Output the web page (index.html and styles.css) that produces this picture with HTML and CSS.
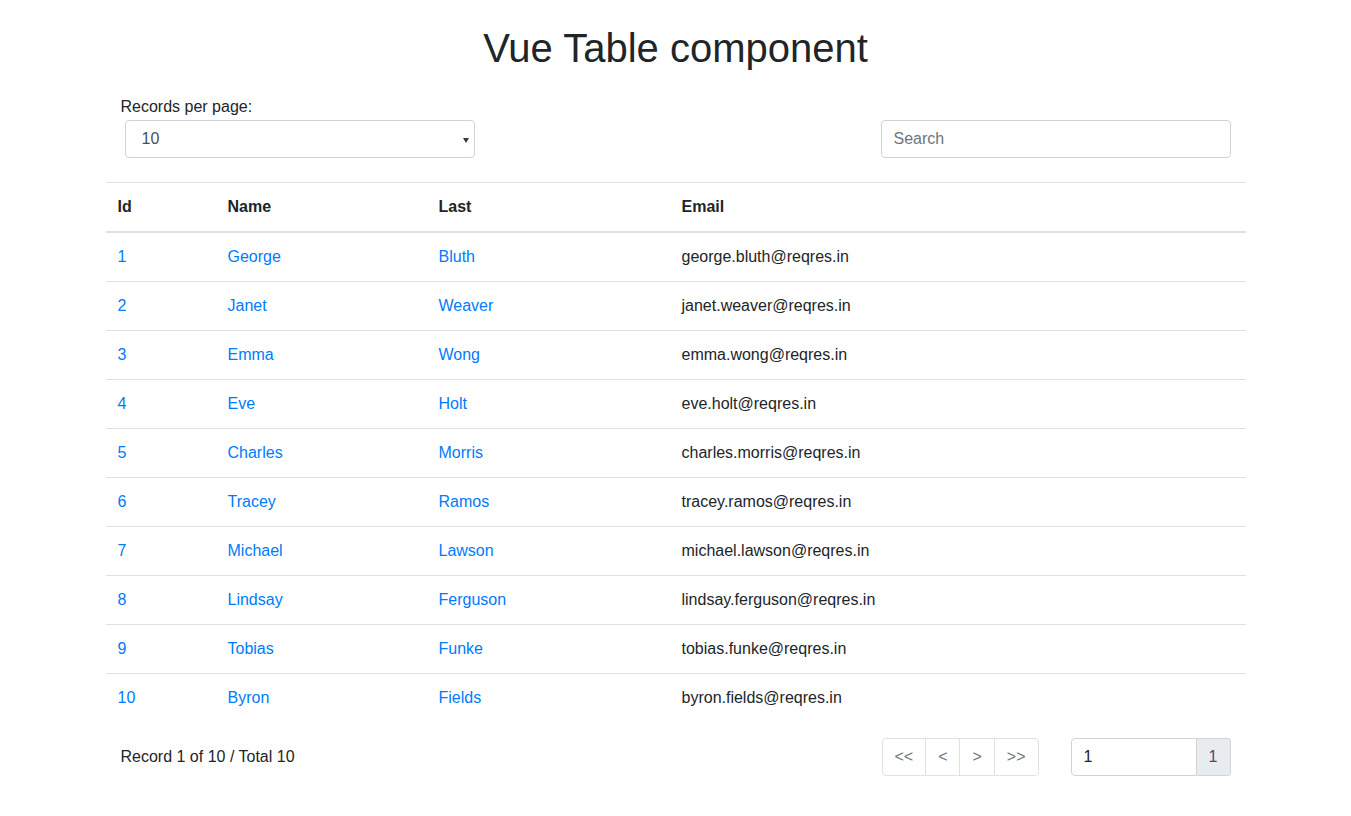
FILE: index.html
```html
<!DOCTYPE html>
<html lang="en">
<head>
<meta charset="utf-8">
<title>Vue Table component</title>
<link rel="stylesheet" href="styles.css">
</head>
<body>
<div class="container">
  <h1 class="title">Vue Table component</h1>
  <div class="controls">
    <div class="per-page">
      <label class="label">Records per page:</label>
      <div class="select">
        <span class="select-value">10</span>
        <span class="caret"></span>
      </div>
    </div>
    <div class="search">
      <input class="input" type="text" placeholder="Search">
    </div>
  </div>
  <table class="table">
    <thead>
      <tr><th class="c-id">Id</th><th class="c-name">Name</th><th class="c-last">Last</th><th>Email</th></tr>
    </thead>
    <tbody>
      <tr><td><a>1</a></td><td><a>George</a></td><td><a>Bluth</a></td><td>george.bluth@reqres.in</td></tr>
      <tr><td><a>2</a></td><td><a>Janet</a></td><td><a>Weaver</a></td><td>janet.weaver@reqres.in</td></tr>
      <tr><td><a>3</a></td><td><a>Emma</a></td><td><a>Wong</a></td><td>emma.wong@reqres.in</td></tr>
      <tr><td><a>4</a></td><td><a>Eve</a></td><td><a>Holt</a></td><td>eve.holt@reqres.in</td></tr>
      <tr><td><a>5</a></td><td><a>Charles</a></td><td><a>Morris</a></td><td>charles.morris@reqres.in</td></tr>
      <tr><td><a>6</a></td><td><a>Tracey</a></td><td><a>Ramos</a></td><td>tracey.ramos@reqres.in</td></tr>
      <tr><td><a>7</a></td><td><a>Michael</a></td><td><a>Lawson</a></td><td>michael.lawson@reqres.in</td></tr>
      <tr><td><a>8</a></td><td><a>Lindsay</a></td><td><a>Ferguson</a></td><td>lindsay.ferguson@reqres.in</td></tr>
      <tr><td><a>9</a></td><td><a>Tobias</a></td><td><a>Funke</a></td><td>tobias.funke@reqres.in</td></tr>
      <tr><td><a>10</a></td><td><a>Byron</a></td><td><a>Fields</a></td><td>byron.fields@reqres.in</td></tr>
    </tbody>
  </table>
  <div class="footer">
    <div class="info">Record 1 of 10 / Total 10</div>
    <div class="nav">
      <div class="pagination">
        <span class="page">&lt;&lt;</span><span class="page">&lt;</span><span class="page">&gt;</span><span class="page">&gt;&gt;</span>
      </div>
      <div class="input-group">
        <input class="input group-input" type="text" value="1">
        <span class="append">1</span>
      </div>
    </div>
  </div>
</div>
</body>
</html>
```
FILE: styles.css
```css
* { box-sizing: border-box; }
html, body { margin: 0; padding: 0; background: #fff; }
body {
  font-family: "Liberation Sans", Arial, sans-serif;
  font-size: 16px;
  line-height: 24px;
  color: #212529;
}
.container {
  width: 1140px;
  margin: 0 auto;
  padding-top: 24px;
}
.title {
  margin: 0 0 8px;
  font-size: 40px;
  font-weight: 500;
  line-height: 48px;
  text-align: center;
}
.controls {
  display: flex;
  justify-content: space-between;
  padding: 0 15px;
  margin-top: 23px;
  margin-bottom: 24px;
}
.per-page { display: flex; flex-direction: column; width: 354px; }
.label { display: block; height: 25px; line-height: 24px; }
.select {
  margin-left: 4px;
  height: 38px;
  border: 1px solid #ced4da;
  border-radius: 4px;
  display: flex;
  align-items: center;
  justify-content: space-between;
  padding: 0 5px 0 16px;
  color: #495057;
}
.caret {
  width: 0; height: 0;
  border-left: 3px solid transparent;
  border-right: 3px solid transparent;
  border-top: 5px solid #343a40;
  margin-top: 2px;
}
.search { padding-top: 25px; }
.input {
  font-family: inherit;
  font-size: 16px;
  color: #495057;
  height: 38px;
  width: 350px;
  padding: 6px 12px;
  border: 1px solid #ced4da;
  border-radius: 4px;
  outline: none;
}
.input::placeholder { color: #6c757d; }
.table {
  width: 100%;
  border-collapse: collapse;
  margin-bottom: 16px;
}
.table th, .table td {
  padding: 12px;
  text-align: left;
  vertical-align: top;
  border-top: 1px solid #dee2e6;
  line-height: 24px;
}
.table th { font-weight: bold; border-bottom: 2px solid #dee2e6; }
.table thead + tbody tr:first-child td { border-top: 0; }
.c-id { width: 110px; }
.c-name { width: 211px; }
.c-last { width: 243px; }
.table a { color: #007bff; text-decoration: none; }
.footer {
  display: flex;
  align-items: center;
  justify-content: space-between;
  padding: 0 15px;
  height: 38px;
}
.nav { display: flex; align-items: center; gap: 32px; }
.pagination {
  display: flex;
  border: 1px solid #dee2e6;
  border-radius: 4px;
  height: 38px;
}
.page {
  padding: 6px 12px;
  color: #6c757d;
  line-height: 24px;
  border-left: 1px solid #dee2e6;
}
.page:first-child { border-left: 0; padding-left: 11px; }
.input-group { display: flex; width: 160px; }
.group-input {
  width: 126px;
  border-radius: 4px 0 0 4px;
  color: #212529;
}
.append {
  width: 34px;
  height: 38px;
  background: #e9ecef;
  border: 1px solid #ced4da;
  border-left: 0;
  border-radius: 0 4px 4px 0;
  text-align: center;
  line-height: 36px;
  color: #495057;
}
```
